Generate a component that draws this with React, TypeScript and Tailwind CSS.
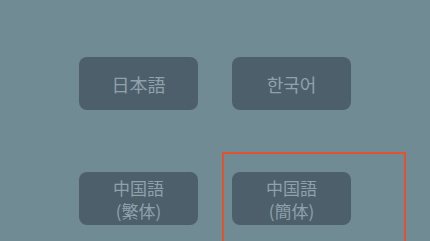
import React from 'react';

const cjk = { fontFamily: '"Noto Sans CJK JP", "Noto Sans CJK KR", "Noto Sans", sans-serif' };

function LangButton({ children, lang }: { children: React.ReactNode; lang?: string }) {
  return (
    <button
      lang={lang}
      className="flex h-[53px] w-[119px] flex-col items-center justify-center rounded-lg bg-[#4d5f6b] text-[#8fa1ab]"
      style={cjk}
    >
      {children}
    </button>
  );
}

export default function App() {
  return (
    <div className="relative h-[241px] w-[430px] overflow-hidden bg-[#718b95]">
      <div className="grid grid-cols-[119px_119px] justify-center gap-x-[34px] gap-y-[62px] pt-[57px]">
        <LangButton lang="ja">
          <span className="text-[18px] leading-none">日本語</span>
        </LangButton>
        <LangButton lang="ko">
          <span className="text-[18px] leading-none" style={{ fontFamily: '"Noto Sans CJK KR", sans-serif' }}>
            한국어
          </span>
        </LangButton>
        <LangButton lang="ja">
          <span className="text-[17px] leading-[23px]">中国語</span>
          <span className="text-[17px] leading-[23px]">(繁体)</span>
        </LangButton>
        <div className="relative">
          <LangButton lang="ja">
            <span className="text-[17px] leading-[23px]">中国語</span>
            <span className="text-[17px] leading-[23px]">(簡体)</span>
          </LangButton>
          {/* highlight frame */}
          <div className="pointer-events-none absolute left-[-10px] top-[-20px] h-[120px] w-[184px] border-2 border-[#e2522f]" />
        </div>
      </div>
    </div>
  );
}
